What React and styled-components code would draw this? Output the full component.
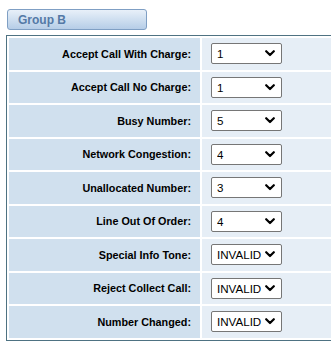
import React from "react";
import styled, { createGlobalStyle } from "styled-components";

const rows = [
  { label: "Accept Call With Charge:", value: "1" },
  { label: "Accept Call No Charge:", value: "1" },
  { label: "Busy Number:", value: "5" },
  { label: "Network Congestion:", value: "4" },
  { label: "Unallocated Number:", value: "3" },
  { label: "Line Out Of Order:", value: "4" },
  { label: "Special Info Tone:", value: "INVALID" },
  { label: "Reject Collect Call:", value: "INVALID" },
  { label: "Number Changed:", value: "INVALID" },
];

const options = ["INVALID", "0", "1", "2", "3", "4", "5", "6", "7", "8", "9"];

const GlobalStyle = createGlobalStyle`
  html, body {
    margin: 0;
    padding: 0;
    background: #fff;
    overflow: hidden;
  }
  body {
    font-family: "Liberation Sans", Arial, sans-serif;
  }
`;

const Page = styled.div`
  box-sizing: border-box;
  width: 100%;
  overflow: hidden;
  padding: 9px 0 0 6px;
`;

const Tab = styled.div`
  box-sizing: border-box;
  margin-left: 1px;
  width: 140px;
  height: 21px;
  padding-left: 10px;
  display: flex;
  align-items: center;
  border: 1px solid #7f9fc4;
  border-radius: 3px;
  background: linear-gradient(to bottom, #e8f0f9 0%, #cfdff0 50%, #b6cde7 100%);
  color: #5479a6;
  font-weight: 700;
  font-size: 12px;
`;

const Table = styled.table`
  margin-top: 5px;
  width: calc(100% + 14px);
  border: 1px solid #4e7282;
  border-spacing: 2px;
`;

const Label = styled.td`
  width: 181px;
  height: 31.5px;
  padding: 0 9px 0 1px;
  background: #d0e0ee;
  text-align: right;
  font-weight: 700;
  font-size: 10.8px;
  color: #000;
`;

const Value = styled.td`
  height: 31.5px;
  padding: 0 0 0 9px;
  background: #e6eef6;
`;

const SelectWrap = styled.div`
  position: relative;
  width: 71px;
  height: 21px;
`;

const Select = styled.select`
  appearance: none;
  box-sizing: border-box;
  width: 71px;
  height: 21px;
  margin: 0;
  padding: 0 0 0 5px;
  border: 1px solid #767676;
  border-radius: 2px;
  background: #fff;
  font-family: "Liberation Sans", Arial, sans-serif;
  font-size: 11.6px;
  color: #000;
  outline: none;
`;

const Chevron = styled.svg`
  position: absolute;
  right: 7px;
  top: 7px;
  pointer-events: none;
`;

function Dropdown({ value }) {
  return (
    <SelectWrap>
      <Select defaultValue={value}>
        {options.map((o) => (
          <option key={o} value={o}>
            {o}
          </option>
        ))}
      </Select>
      <Chevron width="10" height="7" viewBox="0 0 10 7">
        <path
          d="M1.2 1.2 L5 5 L8.8 1.2"
          fill="none"
          stroke="#000"
          strokeWidth="2.2"
          strokeLinecap="round"
          strokeLinejoin="round"
        />
      </Chevron>
    </SelectWrap>
  );
}

export default function App() {
  return (
    <Page>
      <GlobalStyle />
      <Tab>Group B</Tab>
      <Table>
        <tbody>
          {rows.map((r) => (
            <tr key={r.label}>
              <Label>{r.label}</Label>
              <Value>
                <Dropdown value={r.value} />
              </Value>
            </tr>
          ))}
        </tbody>
      </Table>
    </Page>
  );
}
